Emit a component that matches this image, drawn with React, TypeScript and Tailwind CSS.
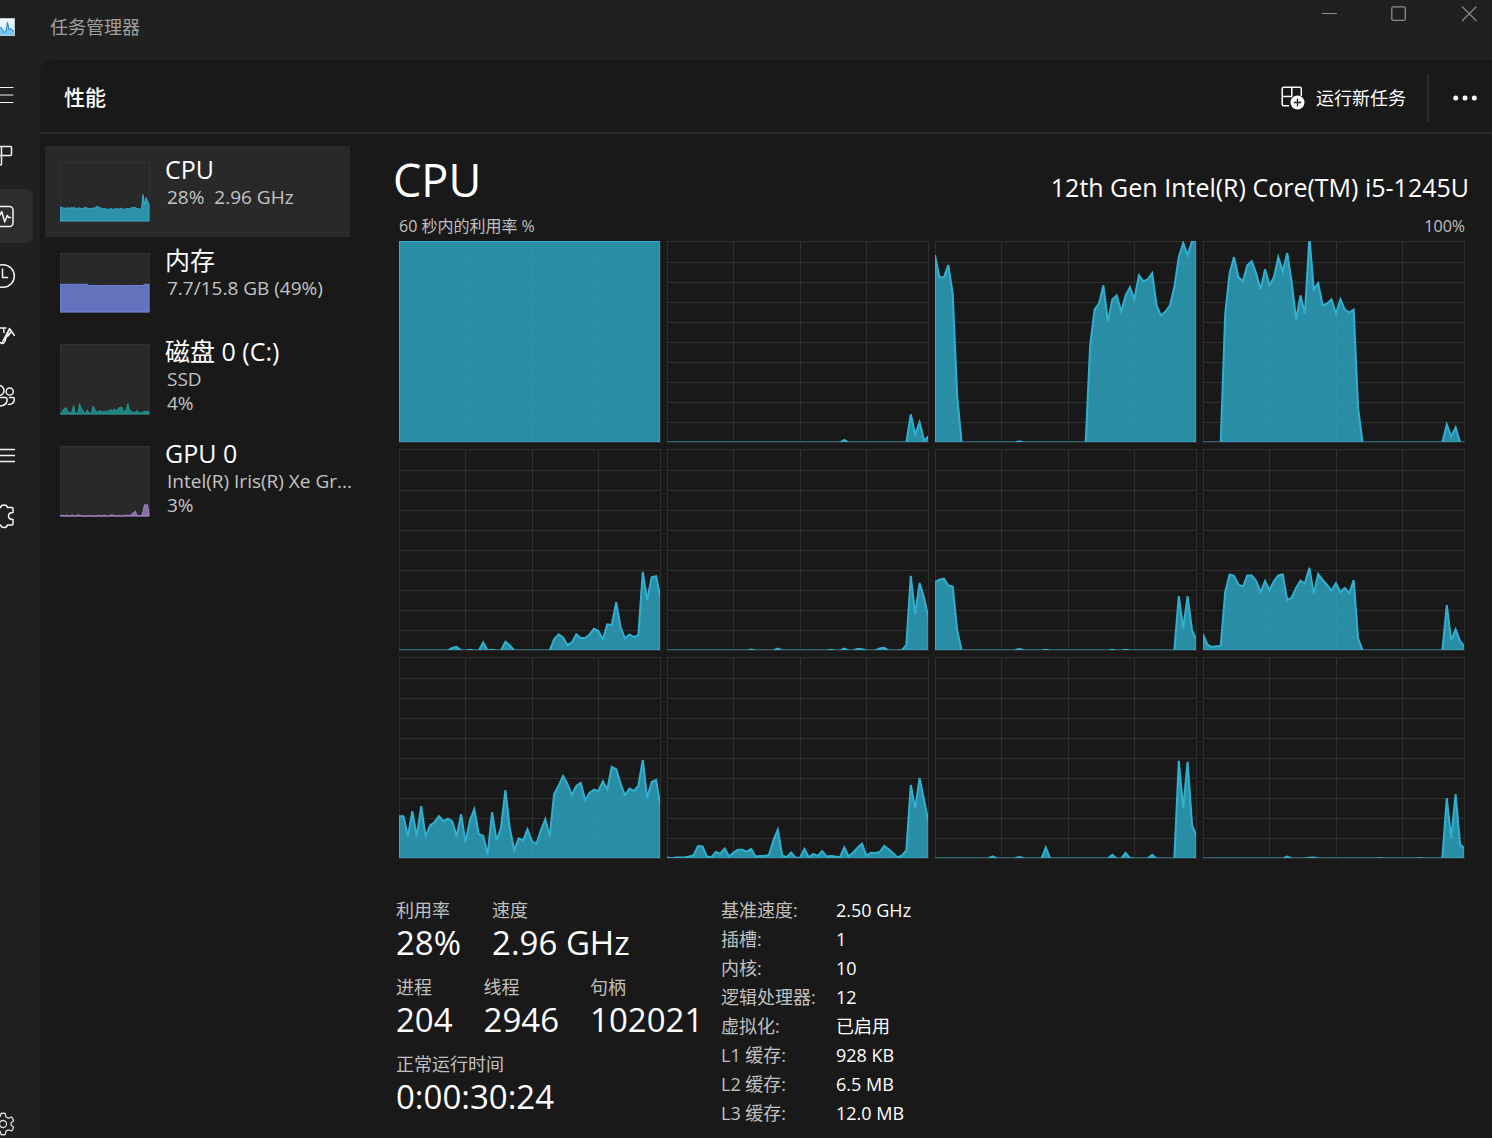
import { useId } from "react";
import type { ReactNode } from "react";

type Sparse = Record<number, number>;

interface ThumbItem {
    title: string;
    lines: string[];
    color: string;
    values: number[];
    height: number;
}

const SAMPLES = 60;

// idle cores are stored as index -> percent, everything else is 0
function fill(points: Sparse): number[] {
    return Array.from({ length: SAMPLES }, (_, i) => points[i] ?? 0);
}

const cores: number[][] = [
    Array.from({ length: SAMPLES }, () => 100),
    fill({ 40: 1.3, 55: 14, 56: 4, 57: 10, 58: 1, 59: 3 }),
    [
        93, 82, 82, 88, 74, 23, 0, 0, 0, 0, 0, 0, 0, 0, 0, 0, 0, 0, 0, 0.6, 0,
        0, 0, 0, 0, 0, 0, 0, 0, 0, 0, 0, 0, 0, 0, 48, 66, 69, 78, 60, 71, 73,
        65, 73, 77, 71, 83, 80, 81, 84, 68, 63, 65, 68, 77, 92, 99, 93, 100,
        100,
    ],
    [
        0, 0, 0, 0, 0, 64, 84, 92, 82, 80, 88, 90, 84, 76, 86, 78, 82, 92, 85,
        94, 80, 61, 73, 64, 102, 76, 79, 68, 69, 71, 64, 71, 66, 64.5, 66, 17,
        0, 0, 0, 0, 0, 0, 0, 0, 0, 0, 0, 0, 0, 0, 0, 0, 0, 0, 0, 9, 3, 7.5, 0,
        0,
    ],
    [
        0, 0, 0, 0, 0, 0, 0, 0, 0, 0, 0, 0, 1.3, 1.8, 0, 0, 0.4, 0, 0, 4, 0,
        0.4, 0, 0, 4.3, 2.5, 0, 0, 0, 0, 0, 0, 0, 0, 0, 5.5, 8, 6.5, 2.7, 4, 8,
        6.2, 6.2, 8, 10.8, 9.7, 5.5, 13, 12.6, 24, 11.5, 6, 8, 6.7, 7.5, 39,
        25, 36.3, 36.8, 26,
    ],
    fill({
        19: 0.5,
        25: 0.9,
        37: 0.4,
        40: 0.9,
        43: 0.9,
        44: 0.6,
        48: 1,
        49: 1.4,
        53: 0.2,
        54: 2.7,
        55: 37,
        56: 18,
        57: 33.5,
        58: 26,
        59: 16,
    }),
    fill({
        0: 34,
        1: 35.2,
        2: 35.7,
        3: 32.2,
        4: 31.7,
        5: 10,
        19: 0.8,
        25: 0.4,
        40: 0.4,
        43: 0.4,
        55: 27,
        56: 11,
        57: 27,
        58: 10,
        59: 5,
    }),
    [
        8, 3, 1.7, 2.1, 2.3, 29, 37.7, 37, 32.7, 31.7, 37.2, 37.2, 34.5, 29,
        34.5, 30, 34.5, 37.2, 37.7, 25, 26.2, 31, 34.7, 33.3, 41, 28, 38, 35,
        32.5, 29.7, 33.5, 29, 31, 28.5, 35, 6, 0, 0, 0, 0, 0, 0, 0, 0, 0, 0, 0,
        0, 0, 0, 0, 0, 0, 0, 0, 22.5, 5, 10.5, 4.7, 2,
    ],
    [
        21, 21, 11, 23.5, 11, 26, 11, 16.3, 18, 21, 18.5, 19.8, 18.5, 11, 22,
        8, 19, 24.5, 12, 11.3, 2, 23, 9, 15, 34, 15, 4, 10, 9, 14.5, 8.5, 7.3,
        14, 19.5, 11, 32, 36, 41, 37, 31.5, 36, 37.5, 29, 32.7, 34.2, 33.5,
        38.3, 34.3, 45.5, 44.3, 37, 31.5, 34.7, 33.5, 36, 49, 30, 38, 39, 26,
    ],
    [
        0.5, 0.1, 0.5, 0.5, 0.5, 1, 1.7, 6.2, 6, 1, 0.6, 3.3, 2.4, 5, 1, 3,
        4.3, 4.3, 3.4, 4.8, 1, 1.3, 1.3, 1.8, 9, 14.3, 1.5, 0.6, 3, 0.4, 0.4,
        4.7, 0.6, 2.3, 1.3, 3.7, 1, 1.2, 1, 0.5, 5.5, 1, 3, 5.3, 7.3, 1.3, 2.9,
        2.8, 3.2, 6.2, 4.6, 2.7, 0.5, 1.5, 4, 36.5, 25, 40, 29, 18,
    ],
    fill({
        13: 1.1,
        19: 0.8,
        25: 5.5,
        40: 1.8,
        43: 2.8,
        44: 0.2,
        49: 1.8,
        55: 48.5,
        56: 25,
        57: 48,
        58: 16.5,
        59: 11,
    }),
    fill({
        19: 0.9,
        24: 0.4,
        25: 0.5,
        40: 0.3,
        49: 0.3,
        55: 30,
        56: 10,
        57: 32,
        58: 7,
        59: 5,
    }),
];

const thumbs: ThumbItem[] = [
    {
        title: "CPU",
        lines: ["28%\u00a0\u00a02.96 GHz"],
        color: "#30aece",
        height: 60,
        values: [
            24, 23, 22, 22, 21, 23, 21, 23, 22, 23, 22, 21, 22, 22, 21, 21, 22,
            23, 22, 21, 21, 21, 22, 22, 24, 25, 23, 22, 21, 21, 21, 20, 20, 20,
            21, 20, 20, 21, 21, 20, 21, 22, 20, 20, 21, 21, 20, 22, 23, 23, 23,
            21, 21, 20, 21, 45, 28, 40, 34, 28,
        ],
    },
    {
        title: "内存",
        lines: ["7.7/15.8 GB (49%)"],
        color: "#7287e6",
        height: 60,
        values: Array.from({ length: SAMPLES }, (_, i) =>
            i < 19 || i > 55 ? 47 : 45,
        ),
    },
    {
        title: "磁盘 0 (C:)",
        lines: ["SSD", "4%"],
        color: "#209a96",
        height: 71,
        values: [
            0, 1, 6, 8, 9, 4, 2, 2, 4, 12, 1, 1, 2, 15, 8, 6, 1, 1, 6, 2, 1, 3,
            11, 7, 4, 2, 5, 4, 3, 4, 4, 3, 5, 4, 7, 4, 7, 5, 5, 9, 9, 10, 3, 4,
            6, 15, 4, 5, 2, 2, 3, 5, 3, 1, 2, 3, 4, 3, 4, 3,
        ],
    },
    {
        title: "GPU 0",
        lines: ["Intel(R) Iris(R) Xe Gr...", "3%"],
        color: "#a484cc",
        height: 71,
        values: [
            0, 1, 1, 0, 1, 1, 0, 0, 2, 0, 0, 0, 2, 1, 1, 0, 0, 0, 0, 1, 0, 0, 0,
            0, 0, 1, 1, 0, 0, 1, 1, 0, 0, 0, 2, 1, 1, 0, 0, 1, 0, 0, 1, 1, 1, 1,
            1, 1, 4, 5, 7, 1, 1, 0, 0, 6, 16, 16, 16, 2,
        ],
    },
];

const specs: [string, string][] = [
    ["基准速度:", "2.50 GHz"],
    ["插槽:", "1"],
    ["内核:", "10"],
    ["逻辑处理器:", "12"],
    ["虚拟化:", "已启用"],
    ["L1 缓存:", "928 KB"],
    ["L2 缓存:", "6.5 MB"],
    ["L3 缓存:", "12.0 MB"],
];

function toPath(values: number[], w: number, h: number) {
    const step = w / (values.length - 1);
    const line = values
        .map((v, i) => `${(i * step).toFixed(1)} ${(h - (v / 100) * h).toFixed(1)}`)
        .join("L");
    return `M0 ${h}L${line}L${w} ${h}Z`;
}

function CoreChart({ values, name }: { values: number[]; name: string }) {
    const clip = useId();
    return (
        <svg
            viewBox="0 0 262 202"
            preserveAspectRatio="none"
            className="block h-[202px] w-full"
            role="img"
            aria-label={name}
        >
            <g stroke="#2f2f2f" shapeRendering="crispEdges" fill="none">
                <rect x="0.5" y="0.5" width="261" height="201" />
                {[66.5, 133.5, 199.5].map((x) => (
                    <path key={x} d={`M${x} 0V202`} />
                ))}
                {[1, 2, 3, 4, 5, 6, 7, 8, 9].map((n) => (
                    <path key={n} d={`M0 ${n * 20 + 1.5}H261`} />
                ))}
            </g>
            <clipPath id={clip}>
                <rect width="261" height="201" />
            </clipPath>
            <g clipPath={`url(#${clip})`}>
                <path
                    d={toPath(values, 261.5, 201.5)}
                    fill="#30aece"
                    fillOpacity="0.78"
                    stroke="#30b0ce"
                    strokeWidth="2"
                />
            </g>
        </svg>
    );
}

function Thumb({ item }: { item: ThumbItem }) {
    const h = item.height;
    return (
        <svg
            width="90"
            height={h}
            viewBox={`0 0 90 ${h}`}
            className="shrink-0 bg-[#292929]"
            aria-hidden="true"
        >
            <rect
                x="0.5"
                y="0.5"
                width="89"
                height={h - 1}
                fill="none"
                stroke="#333333"
            />
            <path
                d={toPath(item.values, 89, h - 1)}
                fill={item.color}
                fillOpacity="0.78"
                stroke={item.color}
            />
        </svg>
    );
}

function NavButton({
    label,
    active,
    children,
}: {
    label: string;
    active?: boolean;
    children: ReactNode;
}) {
    return (
        <button
            type="button"
            aria-label={label}
            className={
                active
                    ? "flex h-[54px] w-[33px] items-center rounded-r-lg bg-[#2d2d2d]"
                    : "flex h-[54px] w-[33px] items-center rounded-r-lg"
            }
        >
            <svg
                width="16"
                height="28"
                viewBox="0 0 16 28"
                fill="none"
                stroke="#f2f2f2"
                strokeWidth="1.5"
                strokeLinejoin="round"
                strokeLinecap="round"
            >
                {children}
            </svg>
        </button>
    );
}

function Stat({ label, value }: { label: string; value: string }) {
    return (
        <div>
            <dt className="text-lg leading-7 text-[#c0c0c0]">{label}</dt>
            <dd className="text-[33px] leading-[38px]">{value}</dd>
        </div>
    );
}

export default function App() {
    return (
        <div className="flex min-h-screen flex-col overflow-hidden bg-[#202020] font-['Open_Sans','Noto_Sans_CJK_SC',sans-serif] text-white">
            <header className="flex h-[60px] items-start justify-between">
                <div className="flex items-center gap-[35px] pt-[13px]">
                    <svg width="15" height="18" viewBox="0 0 15 18">
                        <defs>
                            <linearGradient id="sky" x2="0" y2="1">
                                <stop offset="0" stopColor="#f4f8fb" />
                                <stop offset="1" stopColor="#c4e6fa" />
                            </linearGradient>
                        </defs>
                        <path d="M0 0H15V18H0Z" fill="#b9c6d0" />
                        <path d="M0 1H14V17H0Z" fill="url(#sky)" />
                        <path
                            d="M0 9.5L1.5 10L4 14.5L6 13.5L7.5 4L9 12L10.5 10.5L14 13.5V17H0Z"
                            fill="#7cc4f2"
                        />
                        <path
                            d="M0 9.5L1.5 10L4 14.5L6 13.5L7.5 4L9 12L10.5 10.5L14 13.5"
                            fill="none"
                            stroke="#1f84cf"
                        />
                    </svg>
                    <h1 className="text-lg leading-7 text-[#a0a0a0]">任务管理器</h1>
                </div>
                <div className="flex gap-6 text-[#8c8c8c]">
                    <button
                        type="button"
                        aria-label="最小化"
                        className="flex h-7 w-[46px] items-center justify-center"
                    >
                        <svg width="16" height="16" fill="none" stroke="currentColor">
                            <path d="M1 7.5H16" />
                        </svg>
                    </button>
                    <button
                        type="button"
                        aria-label="最大化"
                        className="flex h-7 w-[46px] items-center justify-center"
                    >
                        <svg width="16" height="16" fill="none" stroke="currentColor">
                            <rect x="0.8" y="0.8" width="13.5" height="13.5" rx="1.5" strokeWidth="1.3" />
                        </svg>
                    </button>
                    <button
                        type="button"
                        aria-label="关闭"
                        className="flex h-7 w-[46px] items-center justify-center"
                    >
                        <svg width="16" height="16" fill="none" stroke="currentColor">
                            <path d="M1 0.5L15.5 15M15.5 0.5L1 15" strokeWidth="1.2" />
                        </svg>
                    </button>
                </div>
            </header>

            <div className="flex grow">
                <nav className="flex w-10 shrink-0 flex-col gap-1.5 pt-[9px]">
                    <NavButton label="打开导航">
                        <path d="M-6 5.5H13M-6 13H13M-6 20.5H13" strokeWidth="1.2" />
                    </NavButton>
                    <NavButton label="进程">
                        <path d="M-5 4.5H10.5Q11.5 4.5 11.5 5.5V12.5Q11.5 13.5 10.5 13.5H-5M1.5 4.5V22Q1.5 23 0.5 23H-5" />
                    </NavButton>
                    <NavButton label="性能" active>
                        <rect x="-8" y="4.5" width="21" height="20" rx="3.5" />
                        <path d="M-4 14H-1L0 13L1.7 9.5L4.7 20L7.2 13.5L8.7 15.5H10.5" />
                    </NavButton>
                    <NavButton label="应用历史记录">
                        <circle cx="3" cy="14" r="11.3" />
                        <path d="M2.5 7V15.5H7.5" />
                    </NavButton>
                    <NavButton label="启动应用">
                        <path d="M-2 6H6M3.5 6L4 10.5M9.5 6.5L2.5 20Q1.5 22 0.2 20.5M9.5 6.5L4.5 20Q3.5 22 1.8 21.5M9.5 6.5L14.3 13.2M6 15.5L11 10L8 14" />
                    </NavButton>
                    <NavButton label="用户">
                        <circle cx="9.7" cy="9.5" r="3.6" />
                        <circle cx="-1" cy="8.5" r="5" />
                        <path d="M-6 15.5H5.5Q7 15.5 7 17V19Q6 24 -1 24M9.5 15.5H13Q14.3 15.5 14.3 17Q14.3 22.5 8.5 22.5" />
                    </NavButton>
                    <NavButton label="详细信息">
                        <path d="M-5 7.5H15M-5 13.5H15M-5 19.5H15" strokeLinecap="butt" />
                    </NavButton>
                    <NavButton label="服务">
                        <path d="M-6 5.5H0.5Q1 3 4 3Q7 3 7.5 5.5H12Q13 5.5 13 6.5V10.5Q8.5 10.5 8.5 14Q8.5 17.5 13 17.5V22Q13 23 12 23H7.5Q7 25.5 4 25.5Q1 25.5 0.5 23H-6" />
                    </NavButton>
                    <div className="mt-auto flex pt-4">
                        <button type="button" aria-label="设置" className="h-[27px]">
                            <svg
                                width="16"
                                height="27"
                                viewBox="0 0 16 27"
                                fill="none"
                                stroke="#d8d8d8"
                                strokeWidth="1.3"
                                strokeLinejoin="round"
                            >
                                <circle cx="3" cy="13" r="3.5" />
                                <path d="M0 6L1 2.5Q3 2 5.2 2.5L6 6L8.5 7.2L11.5 6Q13 7.8 13.6 9.8L11 12V14L13.6 16.2Q13 18.5 11.5 20L8.5 18.9L6 20.2L5.2 23.5Q3 24 1 23.5L0 20" />
                            </svg>
                        </button>
                    </div>
                </nav>

                <main className="flex min-w-0 grow flex-col rounded-tl-xl bg-[#191919]">
                    <div className="flex h-[74px] items-center justify-between border-b-2 border-[#2c2c2c] pl-6 pr-[15px] pt-[3px]">
                        <h2 className="text-[21px] font-medium">性能</h2>
                        <div className="flex items-center">
                            <button type="button" className="flex items-center gap-[11px] text-lg">
                                <svg width="24" height="24" viewBox="0 0 24 24" fill="none">
                                    <path
                                        d="M20.3 10V2.7Q20.3 1.2 18.8 1.2H2.7Q1.2 1.2 1.2 2.7V18.3Q1.2 19.8 2.7 19.8H8M10.8 1.2V10.5M1.2 10.5H11"
                                        stroke="#ffffff"
                                        strokeWidth="1.5"
                                    />
                                    <circle cx="16.5" cy="16.5" r="7" fill="#ffffff" />
                                    <path
                                        d="M16.5 12.8V20.2M12.8 16.5H20.2"
                                        stroke="#191919"
                                        strokeWidth="1.4"
                                    />
                                </svg>
                                运行新任务
                            </button>
                            <span className="ml-[21px] mr-6 h-12 w-0.5 bg-[#2c2c2c]" />
                            <button type="button" aria-label="更多">
                                <svg width="24" height="6" fill="#ffffff">
                                    <circle cx="2.7" cy="3" r="2.5" />
                                    <circle cx="12" cy="3" r="2.5" />
                                    <circle cx="21.3" cy="3" r="2.5" />
                                </svg>
                            </button>
                        </div>
                    </div>

                    <div className="flex grow">
                        <ul className="w-[310px] shrink-0 pl-[5px] pt-3">
                            {thumbs.map((item, index) => (
                                <li key={item.title}>
                                    <button
                                        type="button"
                                        className={
                                            index === 0
                                                ? "flex w-full gap-[15px] bg-[#292929] pb-[15px] pl-[15px] text-left"
                                                : "flex w-full gap-[15px] pb-[15px] pl-[15px] text-left"
                                        }
                                    >
                                        <span className="pt-4">
                                            <Thumb item={item} />
                                        </span>
                                        <span className="-mb-4 block min-w-0 pt-2">
                                            <span className="block text-[25px] leading-[31px]">
                                                {item.title}
                                            </span>
                                            {item.lines.map((line) => (
                                                <span
                                                    key={line}
                                                    className="block whitespace-nowrap pl-0.5 text-[19px] leading-6 text-[#c4c4c4]"
                                                >
                                                    {line}
                                                </span>
                                            ))}
                                        </span>
                                    </button>
                                </li>
                            ))}
                        </ul>

                        <section className="min-w-0 grow pl-[49px] pr-[27px] pt-[19px]">
                            <div className="flex items-center justify-between">
                                <h3 className="-ml-1.5 text-[45px] leading-[54px]">CPU</h3>
                                <p className="-mr-1 pt-3.5 text-[25px] leading-8">
                                    12th Gen Intel(R) Core(TM) i5-1245U
                                </p>
                            </div>
                            <div className="flex justify-between pb-px pt-[5px] text-base leading-7 text-[#c0c0c0]">
                                <span>60 秒内的利用率 %</span>
                                <span>100%</span>
                            </div>
                            <div className="grid grid-cols-4 gap-1.5">
                                {cores.map((values, index) => (
                                    <CoreChart
                                        key={index}
                                        values={values}
                                        name={`CPU ${index}`}
                                    />
                                ))}
                            </div>

                            <div className="-ml-[3px] flex pt-[37px]">
                                <div className="flex w-[325px] shrink-0 flex-col gap-[11px]">
                                    <dl className="flex gap-[31px]">
                                        <Stat label="利用率" value="28%" />
                                        <Stat label="速度" value="2.96 GHz" />
                                    </dl>
                                    <dl className="flex gap-[31px]">
                                        <Stat label="进程" value="204" />
                                        <Stat label="线程" value="2946" />
                                        <Stat label="句柄" value="102021" />
                                    </dl>
                                    <dl>
                                        <Stat label="正常运行时间" value="0:00:30:24" />
                                    </dl>
                                </div>
                                <table className="h-fit text-left text-lg leading-[29px]">
                                    <tbody>
                                        {specs.map(([label, value]) => (
                                            <tr key={label}>
                                                <th className="w-[115px] whitespace-nowrap p-0 font-normal text-[#c0c0c0]">
                                                    {label}
                                                </th>
                                                <td className="whitespace-nowrap p-0">{value}</td>
                                            </tr>
                                        ))}
                                    </tbody>
                                </table>
                            </div>
                        </section>
                    </div>
                </main>
            </div>
        </div>
    );
}
